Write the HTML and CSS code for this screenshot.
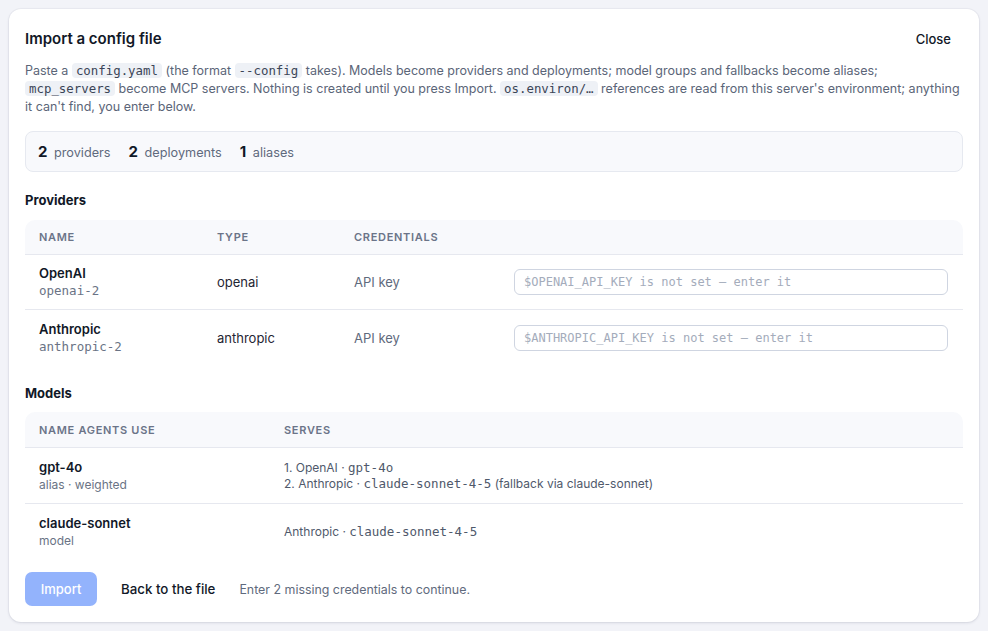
FILE: index.html
```html
<!DOCTYPE html>
<html lang="en">
<head>
<meta charset="utf-8">
<title>Import a config file</title>
<link rel="stylesheet" href="styles.css">
</head>
<body>
<div class="dialog">
  <div class="dialog-head">
    <h1 class="dialog-title">Import a config file</h1>
    <button class="btn-plain close">Close</button>
  </div>
  <p class="intro">Paste a <code>config.yaml</code> (the format <code>--config</code> takes). Models become providers and deployments; model groups and fallbacks become aliases; <code>mcp_servers</code> become MCP servers. Nothing is created until you press Import. <code>os.environ/…</code> references are read from this server's environment; anything it can't find, you enter below.</p>

  <div class="summary">
    <span class="stat"><b>2</b> providers</span>
    <span class="stat"><b>2</b> deployments</span>
    <span class="stat"><b>1</b> aliases</span>
  </div>

  <h2 class="section-title first">Providers</h2>
  <div class="table providers">
    <div class="trow thead">
      <div class="cell">Name</div>
      <div class="cell">Type</div>
      <div class="cell">Credentials</div>
      <div class="cell"></div>
    </div>
    <div class="trow">
      <div class="cell"><div class="name">OpenAI</div><div class="sub mono">openai-2</div></div>
      <div class="cell type">openai</div>
      <div class="cell muted">API key</div>
      <div class="cell"><input class="field" type="text" placeholder="$OPENAI_API_KEY is not set — enter it"></div>
    </div>
    <div class="trow">
      <div class="cell"><div class="name">Anthropic</div><div class="sub mono">anthropic-2</div></div>
      <div class="cell type">anthropic</div>
      <div class="cell muted">API key</div>
      <div class="cell"><input class="field" type="text" placeholder="$ANTHROPIC_API_KEY is not set — enter it"></div>
    </div>
  </div>

  <h2 class="section-title">Models</h2>
  <div class="table models">
    <div class="trow thead">
      <div class="cell">Name agents use</div>
      <div class="cell">Serves</div>
    </div>
    <div class="trow">
      <div class="cell"><div class="name">gpt-4o</div><div class="sub">alias · weighted</div></div>
      <div class="cell serves">
        <div>1. OpenAI · <span class="mono">gpt-4o</span></div>
        <div>2. Anthropic · <span class="mono">claude-sonnet-4-5</span> (fallback via claude-sonnet)</div>
      </div>
    </div>
    <div class="trow">
      <div class="cell"><div class="name">claude-sonnet</div><div class="sub">model</div></div>
      <div class="cell serves">
        <div>Anthropic · <span class="mono">claude-sonnet-4-5</span></div>
      </div>
    </div>
  </div>

  <div class="actions">
    <button class="btn-primary" disabled>Import</button>
    <button class="btn-plain back">Back to the file</button>
    <span class="hint">Enter 2 missing credentials to continue.</span>
  </div>
</div>
</body>
</html>
```

FILE: styles.css
```css
* { box-sizing: border-box; }

html, body {
  margin: 0;
  background: #f2f3f8;
  font-family: Inter, "Noto Sans", sans-serif;
  color: #111827;
}

body { padding: 9px; }

.dialog {
  width: 970px;
  height: 613px;
  background: #fff;
  border-radius: 12px;
  box-shadow: 0 1px 3px rgba(30, 40, 70, 0.12), 0 0 0 1px rgba(30, 40, 70, 0.03);
  padding: 20px 16px 16px 16px;
}

.dialog-head {
  display: flex;
  align-items: center;
  justify-content: space-between;
  height: 20px;
}

.dialog-title {
  margin: 0;
  font-size: 15px;
  font-weight: 600;
  line-height: 20px;
  color: #111827;
}

.btn-plain {
  font-family: inherit;
  background: none;
  border: 0;
  padding: 6px 11px;
  font-size: 13px;
  font-weight: 500;
  color: #111827;
  cursor: pointer;
}

.close { margin-right: 1px; }

.intro {
  margin: 13px 0 0;
  font-size: 12.5px;
  line-height: 18px;
  color: #5b6578;
}

code, .mono {
  font-family: "DejaVu Sans Mono", "Liberation Mono", monospace;
}

/* inline code chips sit inside the 18px text lines without spilling over */
code {
  display: inline-block;
  font-size: 12.4px;
  line-height: 15px;
  background: #eef1f6;
  color: #3b4557;
  border-radius: 4px;
  padding: 0 4px;
}

.summary {
  margin-top: 15px;
  height: 41px;
  border: 1px solid #e6e9f0;
  background: #f8f9fc;
  border-radius: 8px;
  display: flex;
  align-items: center;
  gap: 18px;
  padding: 0 12px;
}

.stat {
  font-size: 12.7px;
  color: #5f6a7d;
}

.stat b {
  font-size: 15px;
  font-weight: 700;
  color: #111827;
  margin-right: 3px;
}

.section-title {
  margin: 19px 0 10px;
  font-size: 13px;
  line-height: 18px;
  font-weight: 700;
  color: #111827;
}

.section-title.first { margin-bottom: 11px; }

.table { width: 100%; }

.trow {
  display: grid;
  align-items: center;
  border-bottom: 1px solid #e6e8ef;
}

.trow:last-child { border-bottom: 0; }

.providers .trow { grid-template-columns: 178px 137px 160px 1fr; height: 55px; }
.models .trow { grid-template-columns: 245px 1fr; height: 56px; }

.cell { padding: 0 14px; font-size: 13px; }
.providers .trow .cell:last-child { padding-right: 15px; }

.thead {
  background: #f8f9fc;
  border-radius: 10px 10px 0 0;
}

.providers .thead { height: 35px; }
.models .thead { height: 36px; }

.thead .cell {
  font-size: 11px;
  font-weight: 600;
  letter-spacing: 0.7px;
  text-transform: uppercase;
  color: #6b7488;
}

.name {
  font-weight: 600;
  font-size: 13px;
  line-height: 17px;
  color: #111827;
}

.sub {
  font-size: 12px;
  line-height: 17px;
  color: #6a7385;
}

.sub.mono { font-size: 12.5px; }

.type { color: #1f2533; }
.muted { color: #5f6a7d; }

.field {
  display: block;
  width: 100%;
  height: 26px;
  border: 1px solid #cfd5e1;
  border-radius: 6px;
  padding: 0 9px;
  font-family: "DejaVu Sans Mono", "Liberation Mono", monospace;
  font-size: 12px;
  color: #111827;
  background: #fff;
  outline: none;
}

.field::placeholder { color: #a4acbb; }

.serves {
  font-size: 12px;
  line-height: 16px;
  color: #4f596b;
}

.serves .mono { font-size: 12.5px; }

.actions {
  margin-top: 12px;
  display: flex;
  align-items: center;
}

.btn-primary {
  font-family: inherit;
  width: 72px;
  height: 34px;
  border: 0;
  border-radius: 7px;
  background: #93b3fc;
  color: #fff;
  font-size: 13px;
  font-weight: 500;
}

.back { margin-left: 13px; font-size: 13.3px; }

.hint {
  margin-left: 13px;
  font-size: 12.4px;
  color: #5f6a7d;
}
```
